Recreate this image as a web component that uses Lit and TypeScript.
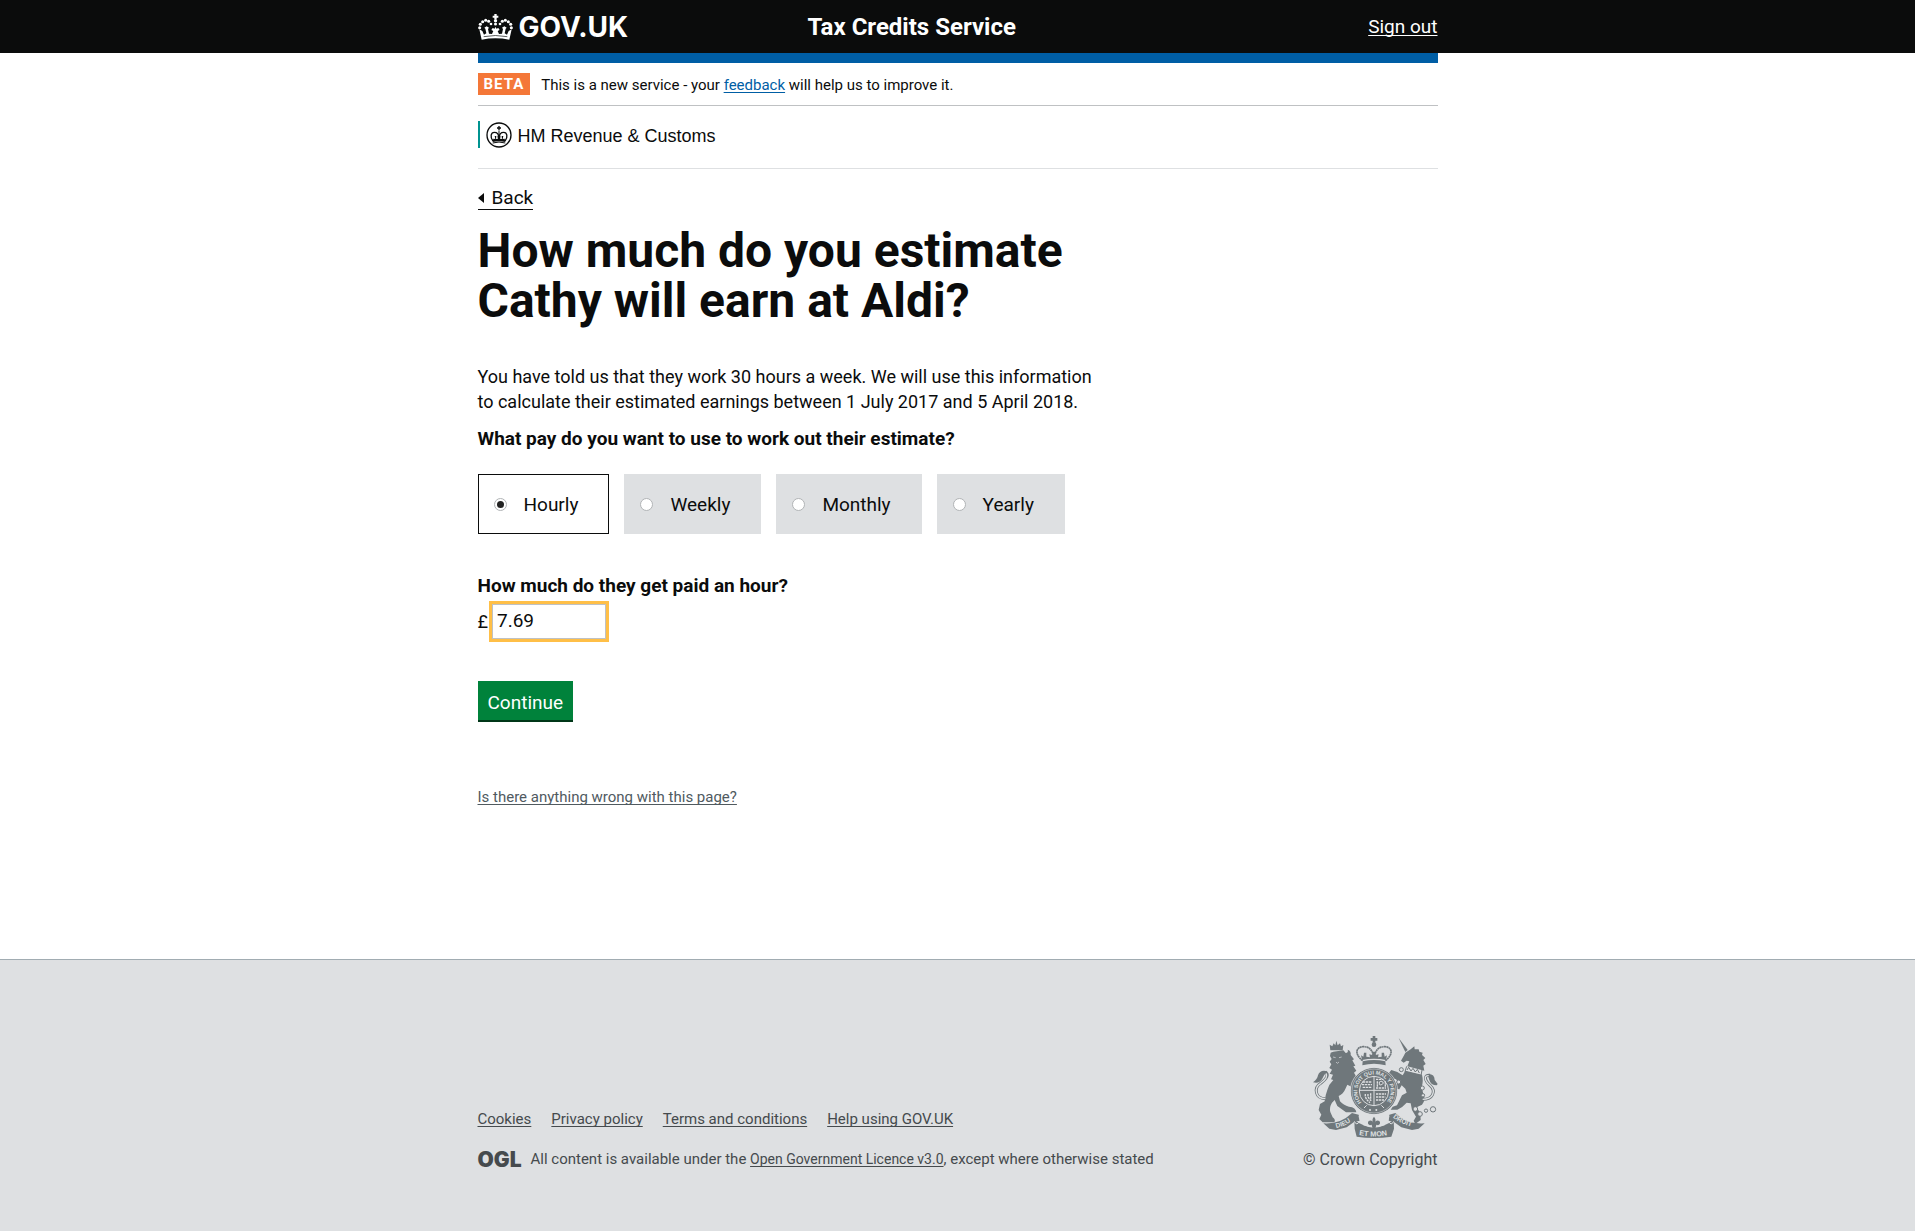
import { LitElement, html, css, svg } from "lit";
import { customElement, state } from "lit/decorators.js";
import { classMap } from "lit/directives/class-map.js";

const PERIODS = ["Hourly", "Weekly", "Monthly", "Yearly"];
const FOOTER_LINKS = ["Cookies", "Privacy policy", "Terms and conditions", "Help using GOV.UK"];

const crown = html`<svg class="crown" viewBox="24 38 105 78" aria-hidden="true">
  <g fill="currentColor">
    ${[[29, 79], [31, 69], [38, 61], [47, 57], [56, 60]].map(
      ([x, y]) => svg`<circle cx=${x} cy=${y} r="4.6"/><circle cx=${153 - x} cy=${y} r="4.6"/>`
    )}
    <path d="M73 38h7v5h5v6h-5v5h-7v-5h-5v-6h5z"/>
    <circle cx="76.500" cy="58" r="5"/><circle cx="76.500" cy="68" r="4.500"/>
    <circle cx="63" cy="68" r="4"/><circle cx="90" cy="68" r="4"/>
    <path d="M28 84 L37 89 L42 100 L49 96 L46 82 L43 79 L50 75 L57 79 L54 83 L57 97 L66 98 L70 89 L64 86 L68 80 L74 82 L76.500 76 L79 82 L85 80 L89 86 L83 89 L87 98 L96 97 L99 83 L96 79 L103 75 L110 79 L107 82 L104 96 L111 100 L116 89 L125 84 L118 115 Q76 107 35 115 Z"/>
  </g>
  <path d="M41 106 Q76 99 112 106" fill="none" stroke="#0b0c0c" stroke-width="2"/>
</svg>`;

const roundel = html`<svg class="roundel" viewBox="0 0 78 78" aria-hidden="true">
  <circle cx="39" cy="39" r="36" fill="none" stroke="currentColor" stroke-width="4"/>
  <path d="M37 12h4v4h4v4h-4v5h-4v-5h-4v-4h4z" fill="currentColor"/>
  <g fill="none" stroke="currentColor" stroke-width="4">
    <path d="M21 57 C11 45 15 31 25 31 C33 31 38 35 38 46 M57 57 C67 45 63 31 53 31 C45 31 40 35 40 46"/>
    <path d="M39 26 V54" stroke-width="3"/>
  </g>
  <path d="M20 60 L22 50 L28 51 L26 42 L31 42 L30 51 L36 50 L34 43 L44 43 L42 50 L48 51 L47 42 L52 42 L50 51 L56 50 L58 60 Q39 55 20 60Z" fill="currentColor"/>
  <path d="M20 63 Q39 57 58 63" fill="none" stroke="currentColor" stroke-width="3"/>
</svg>`;

const chain = [[376, 267, 7], [390, 282, 7], [408, 272, 5], [429, 268, 8], [397, 204, 6], [399, 226, 5], [334, 149, 6], [326, 186, 6]];

const arms = html`<svg class="arms" viewBox="69 48 375 306" aria-hidden="true">
  <defs>
    <path id="garter" d="M215 247 A50 50 0 1 1 289 247"/>
    <path id="ribbon-left" d="M139 324 Q168 318 191 298"/>
    <path id="ribbon-mid" d="M207 345 Q252 354 298 344"/>
    <path id="ribbon-right" d="M308 292 Q338 315 374 322"/>
  </defs>
  <g fill="#6f777b">
    <!-- crown -->
    <path d="M248 48h8v6h6v8h-6v6h-8v-6h-6v-8h6z"/><circle cx="252" cy="74" r="7"/>
    <path d="M216 120 L213 106 L220 110 L222 98 L229 98 L229 110 L240 112 L238 103 L247 105 L247 95 L257 95 L257 105 L266 103 L264 112 L275 110 L275 98 L282 98 L284 110 L291 106 L288 120 Q252 112 216 120Z"/>
    <path d="M218 124 Q252 116 286 124 L287 136 Q252 127 217 136Z"/>
    <!-- lion -->
    <path d="M121 91 L119 74 L127 79 L131 70 L136 76 L139 62 L143 76 L150 70 L153 79 L160 75 L158 91Z"/>
    <path d="M122 98 L130 95 L160 91 L167 99 Q176 98 173 89 Q184 93 182 105 L192 118 L187 121 L196 137 L190 139 L199 152 L192 158 L200 172 L194 180 L198 192 L210 204 L201 223 L188 216 L184 200 L172 194 L166 207 Q160 222 146 228 L150 244 Q160 256 177 260 Q198 262 199 277 L168 277 L142 258 L134 240 L126 248 Q117 262 121 276 L128 292 Q138 299 133 307 L98 307 L88 297 L94 284 L86 270 L90 252 L104 244 Q107 222 112 210 Q117 192 130 180 L123 178 L129 164 L119 161 L126 149 L118 144 L124 133 L119 125 L125 117 L120 108Z"/>
    <!-- unicorn -->
    <path d="M326 54 L353 90 L346 96Z"/>
    <path d="M346 98 L362 88 L373 79 L374 88 L386 88 L388 95 L398 98 L396 105 L406 114 L400 120 L407 132 L400 137 L403 152 L394 150 L352 139 L358 124 L350 122 L341 128 L333 122 L341 108Z"/>
    <path d="M346 152 L396 164 Q401 184 395 200 L400 222 Q408 240 396 254 L380 262 L391 280 L392 300 L376 312 L371 302 L378 290 L366 270 L362 250 L350 248 Q336 264 322 269 L302 269 L308 260 L321 256 L330 238 L336 226 L350 218 L346 206 L335 196 L328 208 L317 206 L313 195 L327 190 L318 178 L302 174 L296 160 L304 150 L322 156 L338 166Z"/>
    <path d="M112 154 Q90 148 84 166 Q82 178 69 187 Q88 192 96 178 Q102 164 112 154Z"/>
    <path d="M412 162 Q434 160 434 180 L443 192 L440 196 Q422 196 418 180Z"/>
    <!-- garter and ribbon -->
    <circle cx="252" cy="213" r="70"/>
    <path d="M100 310 Q150 314 186 279 L206 284 L209 302 L192 306 L170 322 L138 330 L118 326Z"/>
    <path d="M193 300 Q252 344 311 300 L312 326 L304 350 Q252 358 200 350 L194 326Z"/>
    <path d="M404 310 Q350 314 316 279 L298 284 L296 302 L312 306 L334 322 L366 330 L386 326Z"/>
  </g>
  <g fill="none" stroke="#6f777b">
    <path d="M218 122 C190 100 200 80 220 80 C240 80 248 92 252 114 C256 92 264 80 284 80 C304 80 314 100 286 122" stroke-width="5" stroke-dasharray="6 1"/>
    <path d="M106 236 C76 236 70 204 92 190 C110 176 118 164 106 156" stroke-width="9"/>
    <path d="M398 238 C428 238 440 214 420 196 C402 180 402 164 420 166" stroke-width="9"/>
    <path d="M350 139 L345 155 L393 167 L396 150" stroke-width="3"/>
    <path d="M351 150 l5 -8 l7 11 l6 -8 l7 11 l6 -8 l6 11" stroke-width="3"/>
  </g>
  <g fill="none" stroke="#dee0e2">
    <path d="M106 236 C76 236 70 204 92 190 C108 178 114 168 108 160" stroke-width="4"/>
    <path d="M398 238 C428 238 440 214 420 196 C402 180 402 166 416 167" stroke-width="4"/>
    <circle cx="252" cy="213" r="66" stroke-width="1.500"/>
    <circle cx="252" cy="213" r="71" stroke-width="2"/>
    <circle cx="252" cy="213" r="44" stroke-width="3"/>
    <path d="M252 168 V258 M208 211 H296" stroke-width="3"/>
    <path d="M218 186 h28 M216 194 h30 M218 202 h28 M258 178 h22 M258 204 h30 M262 184 v16 M286 184 v18 M226 222 q-2 14 14 26 M234 222 q-2 12 10 20 M242 220 v16 M258 222 h30 M258 231 h28 M258 240 h24" stroke-width="4" stroke-dasharray="7 2"/>
    <path d="M268 186 q10 -6 12 4 q-8 8 -12 4z" stroke-width="3"/>
    <path d="M129 111 l8 2 M147 113 l8 -2 M138 126 l4 4 l5 -4" stroke-width="2"/>
    <path d="M193 304 Q200 320 210 302 M311 304 Q304 320 294 302" stroke-width="3"/>
    <path d="M212 303 Q202 284 214 284 Q228 290 232 292 M292 303 Q302 284 290 284 Q276 290 272 292" stroke-width="3"/>
    <path d="M222 264 L230 256 M282 264 L274 256" stroke-width="3"/>
  </g>
  <path d="M224 286 Q252 292 280 286 L284 316 Q252 330 220 316Z" fill="#dee0e2"/>
  <path d="M252 290 q8 9 2 19 q4 -10 14 -6 q6 8 -4 13 l-5 -2 l-3 12 h-8 l-3 -12 l-5 2 q-10 -5 -4 -13 q10 -4 14 6 q-6 -10 2 -19z" fill="#6f777b"/>
  <g fill="#dee0e2"><circle cx="240" cy="270" r="3"/><circle cx="259" cy="270" r="3"/></g>
  <g fill="none" stroke="#6f777b" stroke-width="3">
    ${chain.map(([x, y, r]) => svg`<circle cx=${x} cy=${y} r=${r} fill="#dee0e2"/>`)}
  </g>
  <g class="motto" fill="#dee0e2">
    <text font-size="16"><textPath href="#garter">HONI SOIT QUI MAL Y PENSE</textPath></text>
    <text font-size="20"><textPath href="#ribbon-left">DIEU</textPath></text>
    <text font-size="22"><textPath href="#ribbon-mid">ET MON</textPath></text>
    <text font-size="20"><textPath href="#ribbon-right">DROIT</textPath></text>
  </g>
</svg>`;

@customElement("app-root")
export class AppRoot extends LitElement {
  static styles = css`
    :host {
      display: flex;
      flex-direction: column;
      min-height: 100vh;
      background: #fff;
      color: #0b0c0c;
      font-family: Roboto, "Liberation Sans", sans-serif;
      font-size: 18px;
      line-height: 25px;
      --grey: #dee0e2;
    }
    * { box-sizing: border-box; }
    h1, p, fieldset, ul { margin: 0; padding: 0; border: 0; }
    svg { display: block; flex: none; }
    a { color: inherit; text-underline-offset: 2px; text-decoration-thickness: 1px; text-decoration-skip-ink: none; }
    .wrap { width: 100%; max-width: 1020px; margin: 0 auto; padding: 0 30px; }

    .header { background: #0b0c0c; color: #fff; }
    .header-row { display: grid; grid-template-columns: 330px 1fr auto; align-items: center; height: 53px; }
    .logo { display: flex; align-items: center; gap: 6px; color: #fff; text-decoration: none; font: 700 28px/34px Inter, sans-serif; }
    .crown { width: 35px; height: 26px; }
    .service { padding-top: 2px; font-size: 24px; font-weight: 700; }
    .sign-out { font-size: 19px; }
    .bar { height: 10px; background: #005ea5; }

    .phase { display: flex; align-items: flex-start; gap: 11px; padding: 10px 0 9px; border-bottom: 1px solid #bfc1c3; font-size: 15px; line-height: 22px; }
    .phase-text { padding-top: 1px; }
    .tag { padding: 1px 6px 0; line-height: 21px; background: #f47738; color: #fff; font-weight: 700; letter-spacing: 1px; }
    .feedback { color: #005ea5; }
    .org { height: 63px; padding-top: 15px; border-bottom: 1px solid var(--grey); }
    .org-name { display: flex; align-items: center; gap: 6px; height: 27px; padding-left: 6px; border-left: 2px solid #009390; font-family: "Liberation Sans", Arial, sans-serif; }
    .org-text { padding-top: 3px; }
    .roundel { width: 26px; height: 26px; }

    .main { padding-bottom: 149px; }
    .back { display: inline-flex; align-items: center; gap: 8px; height: 26px; margin-top: 15px; padding-top: 2px; border-bottom: 1px solid #0b0c0c; font-size: 19px; text-decoration: none; }
    .arrow { border: solid transparent; border-width: 5px 6px 5px 0; border-right-color: #0b0c0c; }
    .title { max-width: 630px; margin-top: 16px; font-size: 48px; line-height: 50px; }
    .intro { max-width: 630px; margin-top: 38px; }
    .question { display: block; padding: 0; font-size: 19px; font-weight: 700; }
    .periods { margin-top: 12px; }
    .choices { display: flex; flex-wrap: wrap; gap: 15px; margin-top: 23px; }
    .choice { display: flex; align-items: center; gap: 17px; height: 60px; padding: 0 30px 0 15px; border: 1px solid var(--grey); background: var(--grey); font-size: 19px; cursor: pointer; }
    .choice.on { background: #fff; border-color: #0b0c0c; }
    .radio { appearance: none; display: grid; place-items: center; width: 13px; height: 13px; margin: 0; border: 1px solid #b1b4b6; border-radius: 50%; background: #fff; }
    .radio:checked::before { content: ""; width: 7px; height: 7px; border-radius: 50%; background: #222; }
    .pay { margin-top: 39px; }
    .money { display: flex; align-items: center; gap: 4px; margin-top: 6px; }
    .amount { width: 114px; height: 35px; padding: 0 4px 2px; border: 1px solid #bfc1c3; outline: 3px solid #ffbf47; font: inherit; font-size: 19px; color: inherit; background: #fff; border-radius: 0; }
    .continue { display: block; height: 39px; margin-top: 42px; padding: 3px 10px 0; border: 0; background: #00823b; color: #fff; box-shadow: 0 2px 0 #003618; font: inherit; font-size: 19px; cursor: pointer; }
    .problem { display: block; width: max-content; margin-top: 65px; font-size: 15px; color: #505a5f; }

    .footer { flex: 1; padding: 76px 0 54px; background: var(--grey); border-top: 1px solid #a1acb2; color: #454a4d; font-size: 15px; }
    .footer-row { display: flex; justify-content: space-between; align-items: flex-end; }
    .links { display: flex; flex-wrap: wrap; gap: 20px; list-style: none; }
    .licence { display: flex; align-items: center; gap: 9px; margin-top: 15px; }
    .ogl { font: 900 21px/25px Inter, sans-serif; }
    .small { font-size: 14px; }
    .copyright { display: flex; flex-direction: column; align-items: flex-end; gap: 9px; font-size: 16px; text-decoration: none; }
    .arms { width: 125px; height: 102px; }
    .motto { font-family: "Liberation Sans", sans-serif; font-weight: 700; }
  `;

  @state() private period = "Hourly";

  render() {
    return html`
      <header class="header">
        <div class="wrap header-row">
          <a class="logo" href="#">${crown}<span>GOV.UK</span></a>
          <span class="service">Tax Credits Service</span>
          <a class="sign-out" href="#">Sign out</a>
        </div>
      </header>
      <div class="wrap">
        <div class="bar"></div>
        <div class="phase">
          <strong class="tag">BETA</strong>
          <span class="phase-text">This is a new service - your <a class="feedback" href="#">feedback</a> will help us to improve it.</span>
        </div>
        <div class="org"><div class="org-name">${roundel}<span class="org-text">HM Revenue &amp; Customs</span></div></div>
      </div>
      <main class="wrap main">
        <a class="back" href="#"><span class="arrow"></span>Back</a>
        <h1 class="title">How much do you estimate Cathy will earn at Aldi?</h1>
        <p class="intro">You have told us that they work 30 hours a week. We will use this information to calculate their estimated earnings between 1 July 2017 and 5 April 2018.</p>
        <fieldset class="periods">
          <legend class="question">What pay do you want to use to work out their estimate?</legend>
          <div class="choices">
            ${PERIODS.map((p) => html`<label class=${classMap({ choice: true, on: p === this.period })}>
              <input class="radio" type="radio" name="period" .checked=${p === this.period} @change=${() => (this.period = p)}>
              <span>${p}</span>
            </label>`)}
          </div>
        </fieldset>
        <div class="pay">
          <label class="question" for="amount">How much do they get paid an hour?</label>
          <div class="money"><span>£</span><input class="amount" id="amount" type="text" value="7.69"></div>
        </div>
        <button class="continue" type="button">Continue</button>
        <a class="problem" href="#">Is there anything wrong with this page?</a>
      </main>
      <footer class="footer">
        <div class="wrap footer-row">
          <div>
            <ul class="links">${FOOTER_LINKS.map((l) => html`<li><a href="#">${l}</a></li>`)}</ul>
            <div class="licence">
              <span class="ogl">OGL</span>
              <span>All content is available under the <a class="small" href="#">Open Government Licence v3.0</a>, except where otherwise stated</span>
            </div>
          </div>
          <a class="copyright" href="#">${arms}<span>© Crown Copyright</span></a>
        </div>
      </footer>
    `;
  }
}
